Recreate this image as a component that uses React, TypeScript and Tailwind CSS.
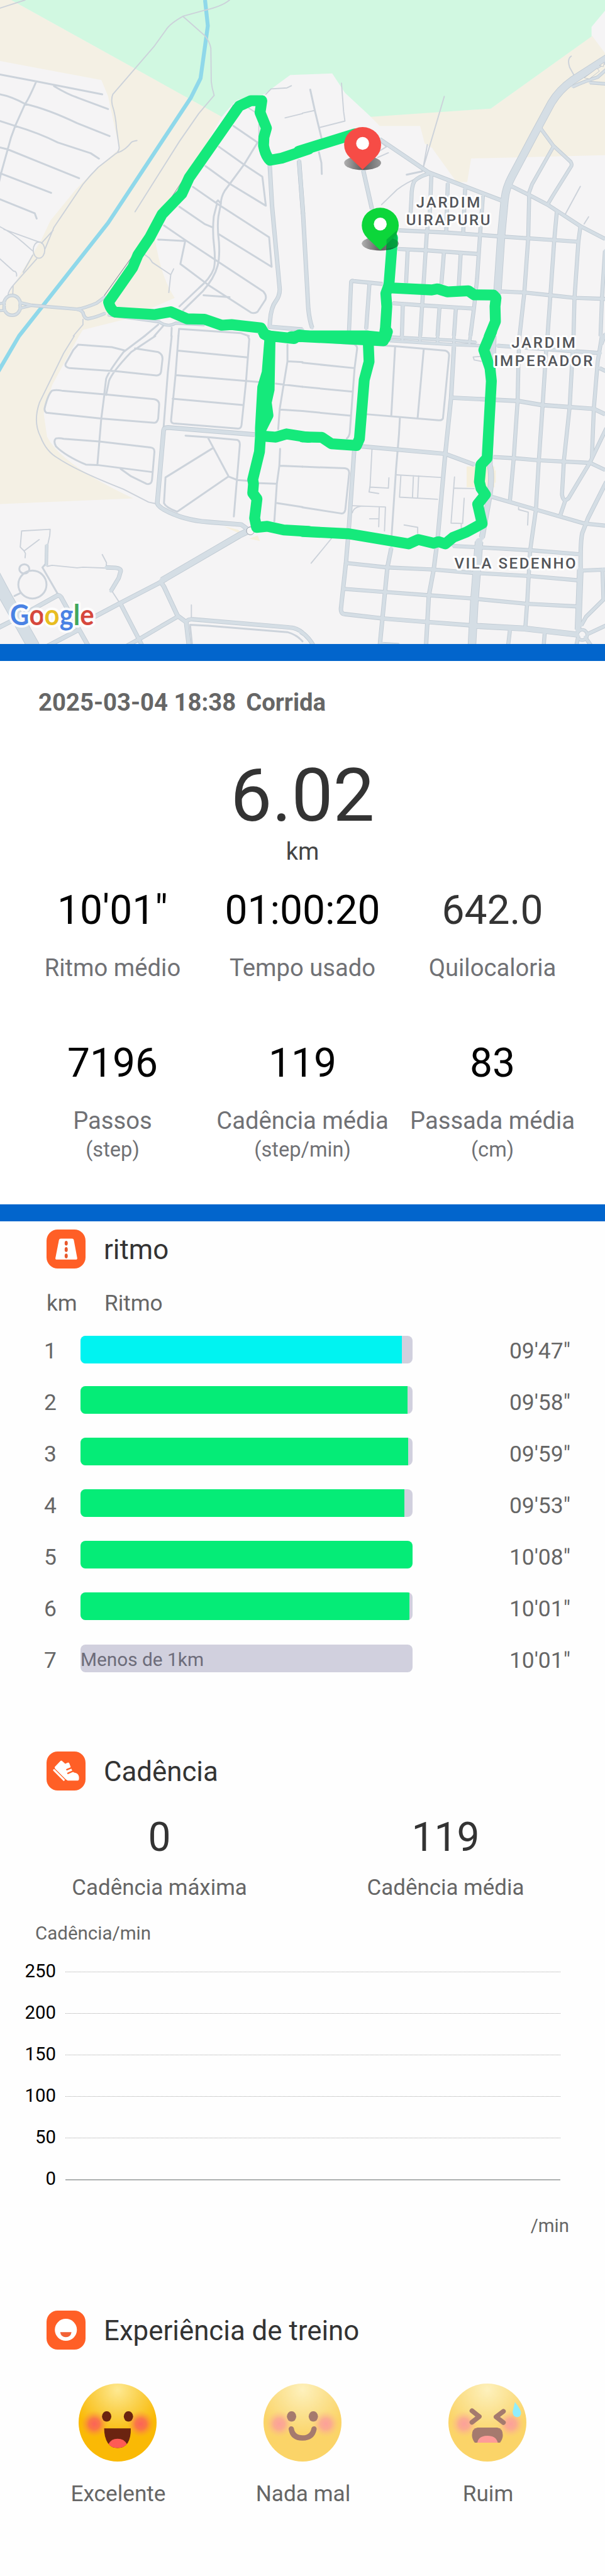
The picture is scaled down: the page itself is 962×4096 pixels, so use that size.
import React from "react";

type Road = [string, number];
interface Tile {
  transform: string;
  trails: string;
  streets: string;
  roads: Road[];
  route: string;
}

// Street geometry, one entry per map quadrant.
const tiles: Tile[] = [
  {
    transform: "scale(0.34439 0.38265)",
    trails:
      "M0,38 L130,0 M1190,0 Q1150,30 1060,48 L950,75 Q880,110 860,140 L800,215 585,440 Q575,460 582,490 Q600,540 604,600 L618,690 Q615,710 600,717 L510,780 Q470,815 430,860 L280,1060 232,1165 M275,1075 L215,1135 M950,78 L1060,165 Q1085,190 1093,225 L1095,380 Q1098,410 1110,445 L1030,530 930,660 700,988 M612,712 Q650,700 680,665 Q690,658 710,656 M0,1058 Q60,1085 120,1132 L168,1170 M20,1070 L205,1130 M170,1190 L120,1270 M190,1208 L75,1325 Q40,1360 42,1380 M68,1335 L66,1380 M0,1208 L70,1265 Q88,1265 86,1288 M172,1167 A30,38 0 1 0 232,1167 A30,38 0 1 0 172,1167 M1378,440 L1405,415 1488,410 1510,400 M1478,550 L1568,530 M430,1490 L430,1515 380,1568 M750,1188 L775,1205 790,1225 885,1282 875,1365 M885,1282 L900,1255 M1290,505 L1325,525 M1342,580 L1342,660",
    streets:
      "M0,348 L190,380 530,440 M280,402 Q350,440 400,455 L560,509 M0,440 Q60,450 130,485 Q250,510 400,575 L568,635 M0,565 L80,588 Q200,620 300,665 L470,715 513,740 M0,688 L40,697 410,832 M0,808 L265,900 M0,930 L180,995 190,1020 M188,380 Q150,460 130,485 L80,585 Q55,640 40,697 L5,810 -5,850 M1210,588 L1335,665 1265,768 1165,890 Q1145,920 1145,950 L1132,1010 Q1125,1060 1135,1130 Q1140,1200 1128,1240 Q1110,1300 1050,1360 L950,1448 M1125,950 L1108,1010 Q1100,1080 1110,1150 Q1118,1220 1108,1255 Q1090,1300 1030,1345 L930,1430 M1120,945 L1130,935 1145,950 M1135,685 L1265,768 1360,825 1378,960 1195,860 1065,775 M1000,872 L1125,950 1395,1107 1408,1245 1135,1093 M930,965 L1060,1045 1105,1062 M850,1052 L960,1120 1120,1215 1365,1360 Q1385,1380 1375,1400 L1335,1455 Q1320,1465 1300,1458 L1080,1330 935,1232 960,1125 820,1118 M1055,1378 L1190,1387 M820,1515 L750,1568 M845,1522 L800,1568 M890,1530 L888,1568 M925,1568 L928,1535 1250,1555 1290,1568",
    roads: [
      ["M1398,770 L1410,960 1450,1350 Q1450,1380 1430,1405 Q1400,1440 1398,1525 L1568,1538", 5.5],
      ["M1550,750 L1571,1000", 5.5],
      ["M22,1425 A42,38 0 1 0 104,1425 A42,38 0 1 0 22,1425", 4],
      ["M100,1412 L165,1425 400,1443 Q440,1438 500,1415 L545,1385", 4],
      ["M100,1440 L165,1425 M-5,1418 L25,1412 M-5,1450 L30,1448", 3],
      ["M400,1443 Q430,1450 432,1465 Q440,1490 460,1487 Q500,1480 545,1462", 4],
      ["M560,1470 L825,1502 Q870,1530 910,1508 L1060,1515", 3.5],
    ],
    route:
      "M1600,696 L1460,738 1400,748 Q1376,728 1366,680 L1368,640 1381,598 1348,525 1357,470 1300,470 1240,495 980,830 942,905 840,1000 775,1110 715,1190 688,1248 563,1410 Q575,1450 600,1457 L800,1468 885,1455 970,1488 1060,1490 1150,1518 1200,1515 1352,1530 1372,1560 1400,1575",
  },
  {
    transform: "translate(540 0) scale(0.34439 0.38265)",
    trails:
      "M0,528 L65,515 M88,595 L220,565 213,520 202,388 M735,450 L640,740 625,785 M647,675 L625,785 M600,830 Q540,850 490,885 L410,955 M1393,262 Q1370,275 1385,315 L1408,352 M1440,870 L1362,1000 M1483,1012 L1460,1045 M395,655 L435,685 380,715 M445,713 L390,735",
    streets: "M40,418 L65,520 100,650 M85,710 L98,760 100,812 M540,815 L620,800",
    roads: [
      ["M-18,750 L3,1000 30,1440 Q35,1490 50,1530", 5.5],
      ["M400,650 L655,805 1030,935", 5.5],
      ["M315,795 L360,975", 5.5],
      ["M655,810 Q600,825 580,845 Q565,870 565,920 L560,1000 M668,815 L660,1000 645,1080 610,1568", 5],
      ["M753,855 L745,1080 M843,880 L833,1085 M935,915 L920,1100 905,1300 890,1430 870,1568", 5],
      ["M500,1075 L745,1085 1050,1105 1300,1120 1430,1128 M495,1162 L640,1168 905,1185", 5],
      ["M545,1170 L537,1320 M733,1180 L720,1325 M820,1185 L810,1335", 5],
      ["M240,1568 L252,1315 Q255,1308 265,1312 L415,1325 M347,1325 L330,1535", 5],
      ["M468,1415 L620,1425 885,1440 M520,1420 L515,1568 M710,1435 L700,1568 M795,1440 L785,1568", 5],
      ["M1030,1360 L1150,1365 1285,1378 1410,1390 1568,1395", 5],
      ["M1175,910 L1170,1110 1150,1365 1125,1568 M1318,990 L1305,1120 1285,1378 1270,1568", 5],
      ["M1440,1060 L1430,1128 1410,1390 1405,1568 M1568,1170 L1552,1395 1545,1568", 5],
      ["M1085,870 L1175,910 1270,955 1440,1055 1568,1115", 5],
      ["M1235,600 L1300,680 1390,755 Q1400,770 1390,780 L1300,910 1270,955 M1300,685 L1190,860 1172,905", 4.5],
      ["M1580,320 L1530,360 Q1460,380 1400,405 M1490,386 L1580,392", 4],
      ["M1590,265 L1400,375 Q1330,420 1290,480 L1200,630 1085,825 Q1055,875 1048,930 L1030,1100 1010,1370", 11.5],
    ],
    route:
      "M-60,1571 L0,1571 420,1590 430,1530 437,1430 432,1370 448,1330 467,1110 M448,1343 L670,1353 700,1348 750,1362 860,1357 890,1376 990,1377 1003,1390 998,1430 1000,1500 968,1570 M-20,706 L270,625",
  },
  {
    transform: "translate(0 600) scale(0.34439 0.38265)",
    trails:
      "M385,0 L330,80 205,310 Q170,400 210,470 Q240,540 300,570 Q400,630 640,715 L770,775 805,782 M130,1035 L132,1015 125,1003 105,985 112,910 260,902 258,930 245,985 M125,1003 L203,950 M245,1075 L270,1070 400,1082 430,1079 550,1083 M530,1020 L552,1058 550,1080 M580,1190 L620,1245 M992,1255 L992,1320",
    streets:
      "M750,0 L640,75 Q560,170 550,200 L540,275 M805,0 L680,75 Q580,170 565,210 L550,275 M540,280 L525,385 505,600 M405,40 L580,52 650,68 M700,58 L820,75 Q845,85 842,110 L835,165 Q832,185 810,184 L610,165 360,150 Q335,145 340,130 L380,65 405,40 M270,255 Q290,250 320,255 L540,272 800,295 Q825,300 825,320 L820,385 Q815,405 800,405 L525,385 240,358 Q228,350 232,335 Q250,270 270,255Z M625,620 L680,655 760,690 Q785,695 788,670 L800,545 Q803,522 780,520 L515,492 330,480 Q310,475 290,478 Q275,490 290,515 Q340,560 445,600 L505,602 790,635 M890,0 L870,170 848,425 M925,0 L910,180 887,390 Q885,405 900,408 L1235,432 Q1250,432 1252,415 L1275,215 1292,15 1285,0 M920,68 L1282,100 M912,183 L1345,215 M895,293 L1258,322 M962,465 L1090,473 1230,485 Q1245,490 1243,510 L1228,670 1212,842 M1080,478 L1185,655 918,820 Q860,800 850,780 L858,660 1100,525 M1190,658 L1230,672 1285,676 M1345,687 L1435,690 M1452,527 L1448,605 1435,690 1422,865 M1448,605 L1568,610 M1437,780 L1568,798 M1490,40 L1490,118 1470,228 1450,340 1442,435 M1490,118 L1568,122 M1430,222 L1568,237 M1452,343 L1568,350 M100,1087 A26,22 0 1 0 152,1087 A26,22 0 1 0 100,1087 M95,1160 A73,65 0 1 0 241,1160 A73,65 0 1 0 95,1160 M110,1198 L75,1213 M300,1205 L220,1080 235,1065 M995,1437 L985,1348 1080,1352 1490,1382 Q1540,1395 1568,1425",
    roads: [
      ["M242,975 L240,1070", 4],
      ["M550,1080 L600,1082 Q630,1085 625,1100 L615,1130 575,1190", 5.5],
      ["M1320,460 L870,427 Q850,427 848,440 L815,780 Q820,795 850,810 Q950,860 1080,868 L1250,880 1300,912", 6],
      ["M1320,895 L1240,930 840,1140", 9],
      ["M860,1135 L820,1155 620,1248 490,1310", 6],
      ["M835,1150 L850,1170 920,1305 965,1335 980,1450", 6],
      ["M965,1335 Q975,1320 1000,1322 L1500,1360 Q1540,1362 1568,1385", 5.5],
      ["M920,1310 L730,1410 650,1450 M625,1250 L740,1450", 5.5],
      ["M-10,1362 L60,1330 300,1210 Q315,1212 320,1225 L360,1290 460,1450 M410,1370 L240,1450", 6],
      ["M-40,1100 L25,1210 175,1450", 19],
    ],
    route:
      "M1600,912 L1470,905 1385,888 1330,893 1320,850 1332,760 1310,733 1314,690 1310,670 1345,540 1350,470 1350,430 1362,240 1385,170 1400,0 M1400,0 L1395,250 1380,310 1389,370 1350,440 M1350,466 L1430,472 1485,457 1600,473 M1370,-8 L1400,0 1525,12 1550,-5 1600,0",
  },
  {
    transform: "translate(540 600) scale(0.34439 0.38265)",
    trails:
      "M360,530 L350,705 445,710 448,662 M350,700 L345,728 395,735 M485,648 L715,660 M510,650 L503,752 700,762 M575,652 L570,755 M602,653 L597,755 M260,792 L430,798 425,910 M398,800 L395,890 M348,853 L395,853 M258,825 Q265,800 300,795 M527,882 L597,893 597,920 M788,658 L770,873 830,875 838,757 M787,710 L890,712 M823,878 L823,895 M150,945 L45,1060 M1120,800 L1120,810 1170,822 1167,882 M925,118 L890,112 885,98 925,95",
    streets:
      "M0,18 L265,38 Q285,45 283,60 L270,150 245,450 Q243,468 230,478 M0,125 L270,150 M0,237 L260,260 M0,350 L250,372 M0,610 L220,617 Q243,620 242,640 L222,810 Q218,830 200,828 L0,800 M370,42 L480,48 740,68 Q760,75 760,90 L728,385 Q722,395 705,393 L330,365 M480,50 L460,375 M628,65 L597,380 M505,380 L500,460 M500,460 L485,620 462,930",
    roads: [
      ["M268,535 L240,900 225,1060 200,1265 Q195,1298 220,1298 L415,1318 650,1335 870,1350", 5.5],
      ["M460,990 L440,1080 400,1450 M785,50 L770,290 740,550 700,950 680,1090 655,1210 640,1450", 5.5],
      ["M305,515 L740,550 890,600 M770,288 L1115,303 1240,322 1510,340 1568,365", 5.5],
      ["M330,15 L780,40 920,45 M460,5 L780,20 900,30", 4],
      ["M518,0 L518,20 M610,0 L608,30 M700,0 L700,30 M785,0 L785,40 M870,0 L865,35", 4],
      ["M1125,0 L1120,100 1115,303 1095,570 1075,770", 5],
      ["M1270,0 L1262,80 1245,320 1225,580 1210,810 1180,1000 1165,1240 1155,1360", 5],
      ["M1405,0 L1395,165 1385,330 1355,580 1345,740 Q1350,765 1362,768 L1335,840 M1362,768 L1378,758 1490,590 1575,430", 5],
      ["M990,565 L1095,570 1225,580 1490,592 1568,625 M980,750 L1210,810 1460,875 1568,885", 5],
      ["M1575,680 L1480,850 1450,920 Q1440,960 1442,1090", 5.5],
      ["M780,980 L890,985 1185,1000 1430,1018 M230,1060 L440,1080 680,1090 880,1105 1175,1120 1430,1140", 5],
      ["M215,1180 L430,1195 655,1210 880,1225 1165,1250 1425,1262", 5],
      ["M1440,1095 L1568,1090 M1555,1090 L1560,1230 1470,1310 1445,1350", 5],
      ["M1552,0 L1530,120 1510,340 1500,570 M1540,150 L1575,165 M1010,45 L1545,80 M1548,40 L1570,-10", 5],
      ["M1075,1375 L1065,1450 M1255,1390 L1250,1450 M1430,1400 L1418,1450 M1480,1390 L1575,1350 M1465,1405 L1500,1450 M415,1437 L500,1442", 5],
      ["M1440,1090 L1428,1370", 9],
      ["M880,1352 L1150,1365 1420,1393", 8],
      ["M1424,1395 A26,24 0 1 0 1476,1395 A26,24 0 1 0 1424,1395", 4],
      ["M-10,1380 Q30,1400 60,1450", 5.5],
      ["M990,0 L985,200 970,600 Q985,650 970,740 L930,940", 8],
      ["M915,960 L890,1250 878,1450", 12],
    ],
    route:
      "M-30,0 L340,0 430,8 440,-20 M340,10 L345,120 320,205 295,480 280,511 150,503 100,473 0,471 M980,-20 L940,65 972,150 979,210 957,570 925,600 917,680 925,710 948,740 908,785 931,875 850,915 780,940 740,970 705,960 680,967 600,950 550,970 240,923 0,912",
  },
];

const stroke = {
  fill: "none",
  strokeLinecap: "round" as const,
  strokeLinejoin: "round" as const,
  vectorEffect: "non-scaling-stroke",
};

function Pin({ x, y, color }: { x: number; y: number; color: string }) {
  return (
    <g transform={`translate(${x} ${y})`}>
      <ellipse cx="0" cy="35" rx="33" ry="12.5" fill="url(#pinShadow)" />
      <path d="M0,47 L-23,25 A33,31.5 0 1 1 23,25 Z" fill={color} strokeLinejoin="round" />
      <circle r="11.5" fill="#fff" />
    </g>
  );
}

function PlaceLabel({ x, y, width, children }: { x: number; y: number; width: number; children: string }) {
  return (
    <text
      x={x}
      y={y}
      textLength={width}
      fontSize="27"
      fontWeight="500"
      fill="#53555a"
      stroke="#fff"
      strokeWidth="7"
      strokeLinejoin="round"
      paintOrder="stroke"
    >
      {children}
    </text>
  );
}

function RouteMap() {
  return (
    <svg viewBox="0 0 1080 1150" preserveAspectRatio="none" className="block h-[1024px] w-full overflow-hidden bg-[#f5f4f5]">
      <defs>
        <linearGradient id="pinShadow">
          <stop offset="0" stopColor="#000" stopOpacity="0.28" />
          <stop offset="0.5" stopColor="#000" stopOpacity="0.62" />
          <stop offset="1" stopColor="#000" stopOpacity="0.38" />
        </linearGradient>
      </defs>
      <path
        d="M0,0 H20 L396,208 275,421 279,440 Q290,500 312,532 L224,570 148,589 141,600 93,688 78,738 84,780 Q110,830 238,890 L0,900 V543 L15,528 22,513 74,428 90,394 134,340 148,325 176,298 213,266 193,172 181,143 0,109Z"
        fill="#f4f0e4"
      />
      <path d="M660,207 L678,225 750,225 758,256 771,264 815,325 834,325 841,283 1080,277 V95 L1057,64 876,194Z" fill="#f4f0e4" />
      <path
        d="M20,0 L396,208.500 Q415,185 425,178 L472,168 518,134 593,131 616,166 662,208.500 876,194 1056,65 1056,48 1080,19 V0Z"
        fill="#d1f8e1"
      />
      <path d="M833,833 h50 v37 h-50Z M878,840 h7 v22 h-7Z M400,940 l25,6 10,10 z M445,962 l15,-6 4,10 z" fill="#f6efdc" />
      <path d="M366,0 L371,46 358,140 341,174 193,398 34,600 -4,665" fill="none" stroke="#8fd8ea" strokeWidth="7" strokeLinejoin="round" />
      {tiles.map((t, i) => (
        <g key={i} transform={t.transform}>
          <path d={t.trails} {...stroke} stroke="#ccd2da" strokeWidth="1.9" />
          <path d={t.streets} {...stroke} stroke="#ccd3db" strokeWidth="3" />
        </g>
      ))}
      {tiles.map((t, i) => (
        <g key={i} transform={t.transform}>
          {t.roads.map(([d, w], k) => (
            <path key={k} d={d} {...stroke} strokeLinecap="butt" stroke="#c1cbd4" strokeWidth={w + 1.4} />
          ))}
        </g>
      ))}
      {tiles.map((t, i) => (
        <g key={i} transform={t.transform}>
          {t.roads.map(([d, w], k) => (
            <path key={k} d={d} {...stroke} stroke="#d5dee5" strokeWidth={w - 0.4} />
          ))}
        </g>
      ))}
      <path d="M186,528 L241,451 327,321 417,187" fill="none" stroke="#8d96a3" strokeWidth="1.2" />
      <path d="M1043,139 L1066,122 1070,127 1052,141Z M1070,117 L1079,111 1077,119Z" fill="#f4f0e4" stroke="#b0bac8" strokeWidth="0.8" />
      <ellipse cx="447" cy="948" rx="7" ry="7" fill="#f7f7f7" stroke="#8d96a3" strokeWidth="1" />
      {tiles.map((t, i) => (
        <path key={i} transform={t.transform} d={t.route} {...stroke} stroke="#15e97b" strokeWidth="17.3" />
      ))}
      <Pin x={647.3} y={256} color="#f64c46" />
      <Pin x={678.8} y={400} color="#0cd63a" />
      <path d="M690,428 L708,412 710,440 690,445Z" fill="#00a83c" opacity="0.75" />
      <g fontFamily="Roboto, sans-serif">
        <PlaceLabel x={743} y={371} width={114}>JARDIM</PlaceLabel>
        <PlaceLabel x={725} y={402.500} width={150}>UIRAPURU</PlaceLabel>
        <PlaceLabel x={913} y={621} width={114}>JARDIM</PlaceLabel>
        <PlaceLabel x={882} y={654} width={176}>IMPERADOR</PlaceLabel>
        <PlaceLabel x={811} y={1015.500} width={217}>VILA SEDENHO</PlaceLabel>
      </g>
      <text
        x="18"
        y="1116.500"
        textLength="150"
        lengthAdjust="spacingAndGlyphs"
        fontFamily="Lato, sans-serif"
        fontSize="51"
        fontWeight="700"
        stroke="#fff"
        strokeOpacity="0.85"
        strokeWidth="9"
        strokeLinejoin="round"
        paintOrder="stroke"
      >
        <tspan fill="#4a82e4">G</tspan>
        <tspan fill="#d6483d">o</tspan>
        <tspan fill="#e8bd21">o</tspan>
        <tspan fill="#4a82e4">g</tspan>
        <tspan fill="#41a75c">l</tspan>
        <tspan fill="#d6483d">e</tspan>
      </text>
    </svg>
  );
}

interface StatProps {
  value: string;
  label: string;
  unit?: string;
  tone?: string;
}

function Stat({ value, label, unit, tone = "text-black" }: StatProps) {
  return (
    <div className="flex w-[302px] flex-col items-center whitespace-nowrap text-[#707175]">
      <div className={`text-[64.1px] leading-[76px] ${tone}`}>{value}</div>
      <div className="mt-[31px] text-[38.2px] leading-[44px]">{label}</div>
      {unit && <div className="mt-[4px] text-[32.6px] leading-[40px]">{unit}</div>}
    </div>
  );
}

function SectionTitle({ icon, children }: { icon: React.ReactNode; children: string }) {
  return (
    <div className="flex h-[62px] items-center gap-[29px] pl-[74px]">
      <svg viewBox="0 0 70 70" className="size-[62px] shrink-0">
        <rect width="70" height="70" rx="20" fill="#ff5f26" />
        {icon}
      </svg>
      <h2 className="pt-[2px] text-[43.8px] leading-[50px] text-[#333]">{children}</h2>
    </div>
  );
}

const roadIcon = (
  <>
    <path d="M25.500,16.500 H46 Q48.500,16.500 49,19 L55,51 Q55.400,54 52.500,54 H18.500 Q15.500,54 16,51 L22.300,19 Q22.800,16.500 25.500,16.500Z" fill="#fff" />
    <ellipse cx="35.300" cy="24.500" rx="2.800" ry="4.300" fill="#e8582c" />
    <ellipse cx="35.300" cy="36" rx="2.800" ry="4.300" fill="#e8582c" />
    <ellipse cx="35.300" cy="47.500" rx="2.800" ry="4.300" fill="#e8582c" />
  </>
);

const shoeIcon = (
  <>
    <path
      d="M15,27.500 L24.500,17.500 Q26.500,15.500 28.500,17.500 L32,20.500 33.500,22 38,20 Q40,19 41,21.500 L44,29.500 47,36 Q49,38 53,38.700 Q58.500,41 58.300,48 Q58.300,52.300 56,52.300 H38 L34.500,50 15.500,31 Q14,29 15,27.500Z"
      fill="#fff"
    />
    <path d="M13.500,33.500 L31,51" stroke="#fff" strokeWidth="3.400" strokeLinecap="round" />
    <path d="M36.500,32.500 L44,29.500 M38.500,39.200 L47,35.500" stroke="#ff5f26" strokeWidth="2.800" strokeLinecap="round" />
  </>
);

const smileIcon = (
  <>
    <circle cx="34.700" cy="34.500" r="19.800" fill="#fff" />
    <path d="M24.500,38.700 H44.800 Q43.500,47.800 34.700,47.800 Q26,47.800 24.500,38.700Z" fill="#f26236" />
  </>
);

const laps = [
  { km: 1, pace: "09'47\"", fill: 96.700, color: "bg-[#00f3f1]", offset: "pt-[17px]" },
  { km: 2, pace: "09'58\"", fill: 98.400, color: "bg-[#05ec77]", offset: "pt-[15px]" },
  { km: 3, pace: "09'59\"", fill: 98.700, color: "bg-[#05ec77]", offset: "pt-[15px]" },
  { km: 4, pace: "09'53\"", fill: 97.600, color: "bg-[#05ec77]", offset: "pt-[15px]" },
  { km: 5, pace: "10'08\"", fill: 100, color: "bg-[#05ec77]", offset: "pt-[15px]" },
  { km: 6, pace: "10'01\"", fill: 99, color: "bg-[#05ec77]", offset: "pt-[15px]" },
  { km: 7, pace: "10'01\"", fill: 0, color: "bg-transparent", offset: "pt-[16px]", note: "Menos de 1km" },
];

function LapRow({ lap }: { lap: (typeof laps)[number] }) {
  return (
    <div className="flex h-[82px] pr-[55px] pl-[60px] text-[35.4px] leading-[82px] text-[#666]">
      <div className="w-[40px] text-center">{lap.km}</div>
      <div className={`ml-[28px] ${lap.offset}`}>
        <div className="flex h-[44px] w-[528px] items-center overflow-hidden rounded-[8px] bg-[#d1d0de]">
          {lap.note ? (
            <span className="pt-[3px] text-[29.8px] leading-[36px] text-[#6d6c7a]">{lap.note}</span>
          ) : (
            <div className={`h-full ${lap.color}`} style={{ width: `${lap.fill}%` }} />
          )}
        </div>
      </div>
      <div className="ml-auto">{lap.pace}</div>
    </div>
  );
}

function Face({ id, faded, children }: { id: string; faded?: boolean; children: React.ReactNode }) {
  return (
    <svg viewBox="0 0 139 139" className={`size-[124px] ${faded ? "opacity-60" : ""}`}>
      <defs>
        <radialGradient id={`${id}-skin`} cx="0.5" cy="0.08" r="0.6">
          <stop offset="0" stopColor="#fee992" />
          <stop offset="0.5" stopColor="#fad04a" />
          <stop offset="1" stopColor="#fab905" />
        </radialGradient>
        <radialGradient id={`${id}-blush`}>
          <stop offset="0" stopColor="#fb6358" />
          <stop offset="0.4" stopColor="#fa6a50" stopOpacity="0.85" />
          <stop offset="1" stopColor="#fba030" stopOpacity="0" />
        </radialGradient>
      </defs>
      <circle cx="69.500" cy="69.500" r="69.500" fill={`url(#${id}-skin)`} />
      <circle cx="28" cy="72" r="24" fill={`url(#${id}-blush)`} />
      <circle cx="111" cy="72" r="24" fill={`url(#${id}-blush)`} />
      {children}
    </svg>
  );
}

function Feeling({ label, children }: { label: string; children: React.ReactNode }) {
  return (
    <div className="flex w-[294px] flex-col items-center">
      {children}
      <div className="mt-[30px] pl-[3px] text-[35.2px] leading-[42px] text-[#666]">{label}</div>
    </div>
  );
}

export default function App() {
  return (
    <main className="flex h-[4096px] w-[962px] flex-col overflow-hidden bg-[#fefefe] font-['Roboto',sans-serif]">
      <RouteMap />
      <div className="h-[27px] shrink-0 bg-[#0265cc]" />

      <section className="h-[864px] shrink-0 bg-white pt-[44px]">
        <h1 className="pl-[61px] text-[38.3px] leading-[44px] font-bold whitespace-pre text-[#666]">
          2025-03-04 18:38<span className="ml-[16px]">Corrida</span>
        </h1>
        <div className="mt-[66px] text-center text-[117.6px] leading-[120px] text-[#333]">6.02</div>
        <div className="mt-[7px] text-center text-[38px] leading-[44px] text-[#444]">km</div>
        <div className="mt-[34px] flex justify-center">
          <Stat value={"10'01\""} label="Ritmo médio" />
          <Stat value="01:00:20" label="Tempo usado" />
          <Stat value="642.0" label="Quilocaloria" tone="text-[#333]" />
        </div>
        <div className="mt-[92px] flex justify-center">
          <Stat value="7196" label="Passos" unit="(step)" />
          <Stat value="119" label="Cadência média" unit="(step/min)" />
          <Stat value="83" label="Passada média" unit="(cm)" />
        </div>
      </section>

      <div className="h-[27px] shrink-0 bg-[#0265cc]" />

      <section className="shrink-0 pt-[13px]">
        <SectionTitle icon={roadIcon}>ritmo</SectionTitle>
        <div className="mt-[34px] flex pl-[74px] text-[35.2px] leading-[42px] text-[#666]">
          <span className="w-[92px]">km</span>
          <span>Ritmo</span>
        </div>
        <div className="mt-[14px]">
          {laps.map((lap) => (
            <LapRow key={lap.km} lap={lap} />
          ))}
        </div>
      </section>

      <section className="shrink-0 pt-[104px]">
        <SectionTitle icon={shoeIcon}>Cadência</SectionTitle>
        <div className="mt-[37px] flex pl-[26px]">
          {[
            ["0", "Cadência máxima"],
            ["119", "Cadência média"],
          ].map(([value, label]) => (
            <div key={label} className="flex w-[455px] flex-col items-center">
              <div className="text-[64.1px] leading-[76px] text-[#333]">{value}</div>
              <div className="mt-[21px] text-[34.9px] leading-[42px] text-[#666]">{label}</div>
            </div>
          ))}
        </div>
        <div className="mt-[33px] pl-[56px] text-[29.5px] leading-[36px] text-[#666]">Cadência/min</div>
        <div className="mt-[9px] pr-[71px]">
          {[250, 200, 150, 100, 50, 0].map((tick) => (
            <div key={tick} className="flex h-[66px] items-center">
              <div className="w-[89px] text-right text-[29.4px] leading-[36px] text-black">{tick}</div>
              <div
                className={
                  tick === 0
                    ? "mt-[3px] ml-[15px] h-[2px] flex-1 bg-[#adb1b1]"
                    : "mt-[2px] ml-[15px] flex-1 border-t border-dotted border-[#a8a8a8]"
                }
              />
            </div>
          ))}
        </div>
        <div className="mt-[24px] pr-[57px] text-right text-[29.4px] leading-[36px] text-[#666]">/min</div>
      </section>

      <section className="shrink-0 pt-[117px]">
        <SectionTitle icon={smileIcon}>Experiência de treino</SectionTitle>
        <div className="mt-[54px] flex pl-[39.5px]">
          <Feeling label="Excelente">
            <Face id="great">
              <ellipse cx="50" cy="58.600" rx="8.300" ry="9.300" fill="#6b2410" />
              <ellipse cx="88.800" cy="58.600" rx="8.300" ry="9.300" fill="#6b2410" />
              <path d="M45.500,80 H93 Q93.500,96 87.500,106 Q81,115 69.500,115 Q58,115 52,106 Q45.500,96 45.500,80Z" fill="#6b2410" />
              <path d="M53.500,108 Q58,98.500 69.500,98.500 Q81,98.500 86,108 Q80,115 69.500,115 Q59,115 53.500,108Z" fill="#fe5b55" />
            </Face>
          </Feeling>
          <Feeling label="Nada mal">
            <Face id="good" faded>
              <ellipse cx="50" cy="58.600" rx="8.300" ry="9.300" fill="#6b2410" />
              <ellipse cx="88.800" cy="58.600" rx="8.300" ry="9.300" fill="#6b2410" />
              <path d="M49.500,81 Q52,97 69.500,97 Q87,97 90,81" fill="none" stroke="#6b2410" strokeWidth="9.500" strokeLinecap="round" />
            </Face>
          </Feeling>
          <Feeling label="Ruim">
            <Face id="bad" faded>
              <path d="M42,48.500 L55,58.800 42,69 M98,49.500 L85,59.500 98,69.500" fill="none" stroke="#6b2410" strokeWidth="8.500" strokeLinecap="round" strokeLinejoin="round" />
              <path d="M52,78.500 H87 Q97,80 97,92 Q97,99 92,105.500 H47 Q42,99 42,92 Q42,80 52,78.500Z" fill="#6b2410" />
              <path d="M51.500,105.500 Q54,93 69.500,93 Q85,93 88,105.500Z" fill="#fe5b55" />
              <path d="M118.500,33 Q129.500,46 129.500,53 Q128.500,60 122,60 Q114.500,59 114.500,50 Z" fill="#48e4fb" />
            </Face>
          </Feeling>
        </div>
      </section>
    </main>
  );
}
